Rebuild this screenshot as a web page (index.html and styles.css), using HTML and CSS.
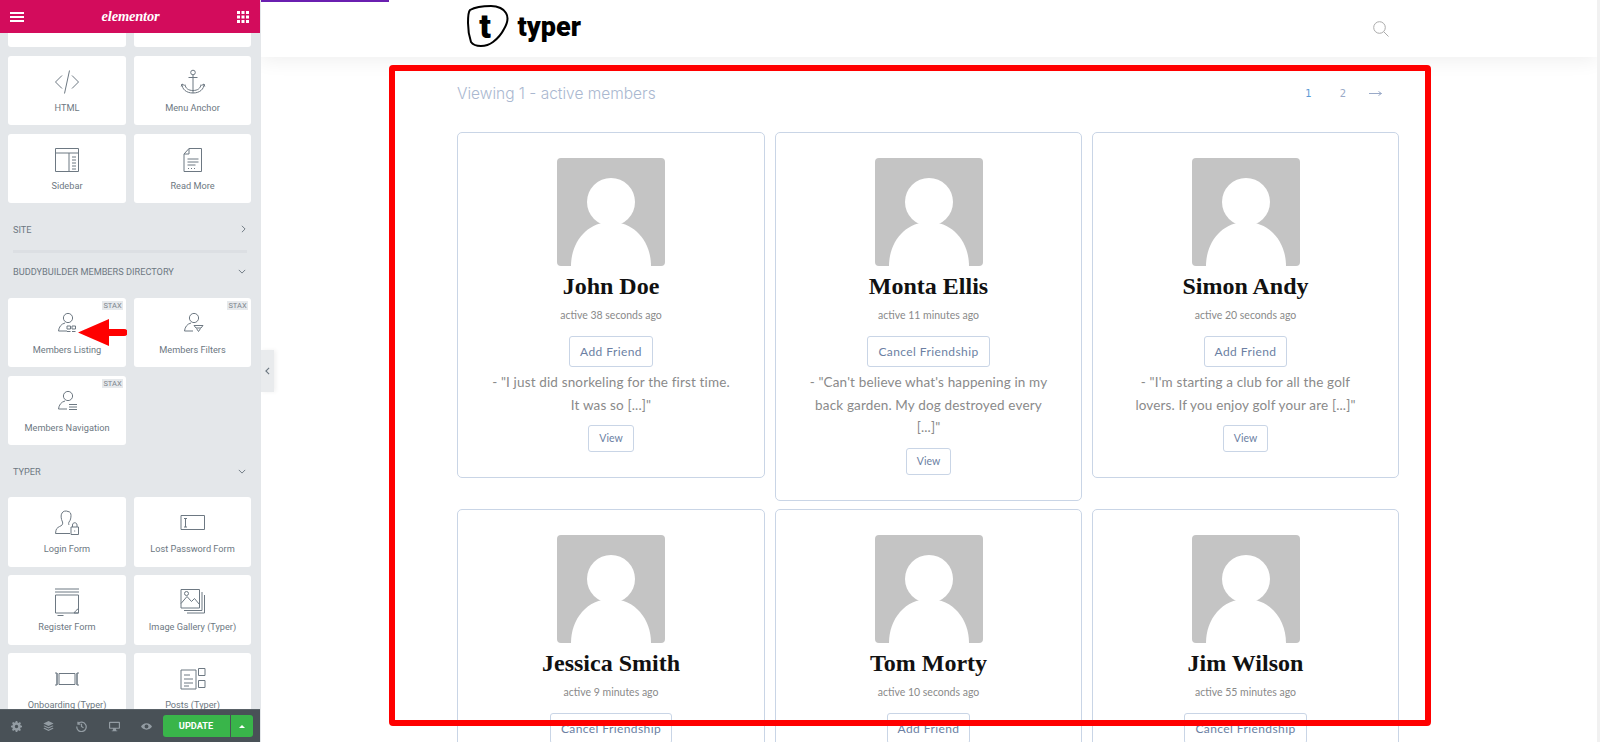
FILE: index.html
```html
<!DOCTYPE html>
<html lang="en">
<head>
<meta charset="utf-8">
<title>Members Listing - Elementor</title>
<link rel="stylesheet" href="styles.css">
</head>
<body>
<svg class="defs" width="0" height="0" aria-hidden="true">
  <symbol id="avatar" viewBox="0 0 108 108">
    <rect width="108" height="108" rx="4" fill="#c4c4c4"/>
    <circle cx="54" cy="44" r="24" fill="#fff"/>
    <path d="M14 108C14 84 30 64 54 64S94 84 94 108Z" fill="#fff"/>
  </symbol>
  <symbol id="person" viewBox="0 0 26 26">
    <circle cx="14" cy="7" r="4.6"/>
    <path d="M11 12C7 13 5 16 4.500 20H13"/>
  </symbol>
</svg>

<div class="app">
  <aside class="sidebar">
    <header class="sb-head">
      <svg class="sb-burger" viewBox="0 0 14 10"><path d="M0 0h14v2H0zM0 4h14v2H0zM0 8h14v2H0z" fill="#fff"/></svg>
      <span class="sb-logo">elementor</span>
      <svg class="sb-grid" viewBox="0 0 12 12"><path d="M0 0h3v3H0zM4.500 0h3v3h-3zM9 0h3v3H9zM0 4.500h3v3H0zM4.500 4.500h3v3h-3zM9 4.500h3v3H9zM0 9h3v3H0zM4.500 9h3v3h-3zM9 9h3v3H9z" fill="#fff"/></svg>
    </header>

    <div class="sb-scroll">
      <div class="widgets widgets-cut">
        <div class="widget"></div>
        <div class="widget"></div>
        <div class="widget">
          <svg class="w-ico" viewBox="0 0 26 26"><path d="M8 6.500 1.500 13 8 19.500M18 6.500 24.500 13 18 19.500M15.500 1.500 10.500 24.500"/></svg>
          <span class="w-label">HTML</span>
        </div>
        <div class="widget">
          <svg class="w-ico" viewBox="0 0 26 26"><circle cx="13" cy="3.500" r="2.300"/><path d="M13 6v18M8.500 8.500h9M2 15c0 5 4 9 11 9s11-4 11-9M2 15l-.8 2.500M2 15l2.500 1.500M24 15l.8 2.500M24 15l-2.500 1.500M5 15.500c.5 4 3.500 6 8 6s7.500-2 8-6"/></svg>
          <span class="w-label">Menu Anchor</span>
        </div>
        <div class="widget">
          <svg class="w-ico" viewBox="0 0 26 26"><path d="M1.500 1.500h23v23h-23zM1.500 6h23M15 6v18.500M18 10h4M18 13h4M18 16h4M18 19h4M18 22h4"/></svg>
          <span class="w-label">Sidebar</span>
        </div>
        <div class="widget">
          <svg class="w-ico" viewBox="0 0 26 26"><path d="M9 1.500h12.500v23h-17.500V7ZM9 1.500V7H4M7.500 12h11M7.500 15h11M7.500 18h8M8 21.500h1M11 21.500h1M14 21.500h1"/></svg>
          <span class="w-label">Read More</span>
        </div>
      </div>

      <div class="cat-head"><span>Site</span><svg class="chev" viewBox="0 0 6 10"><path d="M1 1l4 4-4 4"/></svg></div>
      <div class="cat-rule"></div>

      <div class="cat-head cat-open"><span>BuddyBuilder Members Directory</span><svg class="chev-d" viewBox="0 0 10 6"><path d="M1 1l4 4 4-4"/></svg></div>
      <div class="widgets">
        <div class="widget">
          <span class="badge">STAX</span>
          <svg class="w-ico" viewBox="0 0 26 26"><use href="#person"/><path d="M13 15h3.500v3H13zM18 15h3.500v3H18zM13 20.500h3.500M18 20.500h3.500"/></svg>
          <span class="w-label">Members Listing</span>
        </div>
        <div class="widget">
          <span class="badge">STAX</span>
          <svg class="w-ico" viewBox="0 0 26 26"><use href="#person"/><path d="M14 14.500h9l-2 2.500h-5ZM16.500 17.500l2 3 2-3"/></svg>
          <span class="w-label">Members Filters</span>
        </div>
        <div class="widget">
          <span class="badge">STAX</span>
          <svg class="w-ico" viewBox="0 0 26 26"><use href="#person"/><path d="M15 15.500h8M15 18h8M15 20.500h8"/></svg>
          <span class="w-label">Members Navigation</span>
        </div>
      </div>

      <div class="cat-head cat-open"><span>Typer</span><svg class="chev-d" viewBox="0 0 10 6"><path d="M1 1l4 4 4-4"/></svg></div>
      <div class="widgets">
        <div class="widget">
          <svg class="w-ico" viewBox="0 0 26 26"><path d="M8 3c1-2 4-2.500 6-1.500 2 0 3 2 3 4s-.5 5-2 6.500c-.5 1-.5 2 0 3M8 3C6.500 5 7 9 8.500 12c.5 1.500 0 3-1.500 3.800-2 1-4.500 2-5 4.500l-.5 3.200H16"/><path d="M17 17h7.500v7.500H17zM18.500 17v-2c0-3 4.500-3 4.500 0v2M20.700 20.500v1"/></svg>
          <span class="w-label">Login Form</span>
        </div>
        <div class="widget">
          <svg class="w-ico" viewBox="0 0 26 26"><path d="M1 5.500h23.500v14H1zM4 8.500h3M4 17h3M5.500 8.500V17"/></svg>
          <span class="w-label">Lost Password Form</span>
        </div>
        <div class="widget">
          <svg class="w-ico" viewBox="0 0 26 26"><path d="M1 1h24M1 4h24M1.500 7h23v18h-23zM22 22.500l2.500-2v4.500H20ZM3.500 27.500h6"/></svg>
          <span class="w-label">Register Form</span>
        </div>
        <div class="widget">
          <svg class="w-ico" viewBox="0 0 26 26"><path d="M1 1.500h18.500v18.500H1zM22 4v18.500H4M24.500 7v18H7M1 15.500l6-7 4.500 5 3-3 5 6"/><circle cx="6.500" cy="5.500" r="2"/></svg>
          <span class="w-label">Image Gallery (Typer)</span>
        </div>
        <div class="widget">
          <svg class="w-ico" viewBox="0 0 26 26"><path d="M5 7.500h16v11H5zM1 7h2v12H1M25 7h-2v12h2M3 7v12M23 7v12"/></svg>
          <span class="w-label">Onboarding (Typer)</span>
        </div>
        <div class="widget">
          <svg class="w-ico" viewBox="0 0 26 26"><path d="M1 4h15v19H1zM4 9h6M4 13h9M4 17h9M4 20h5M18.500 2.500H25v7h-6.500zM18.500 14.500H25v7h-6.500z"/></svg>
          <span class="w-label">Posts (Typer)</span>
        </div>
      </div>
    </div>

    <footer class="sb-foot">
      <div class="foot-tools">
        <svg class="foot-ico" viewBox="0 0 14 14"><path d="M6 0h2l.4 1.800 1.300.6 1.600-1 1.400 1.400-1 1.600.6 1.300L14 6v2l-1.800.4-.6 1.300 1 1.600-1.400 1.400-1.600-1-1.300.6L8 14H6l-.4-1.800-1.300-.6-1.600 1-1.400-1.400 1-1.600-.6-1.300L0 8V6l1.800-.4.6-1.300-1-1.600 1.400-1.400 1.600 1 1.300-.6ZM7 4.800a2.200 2.200 0 1 0 0 4.400 2.200 2.200 0 0 0 0-4.400Z" fill-rule="evenodd"/></svg>
        <svg class="foot-ico" viewBox="0 0 14 14"><path d="M7 0l6.500 3.200L7 6.400.5 3.200ZM2 5.600l5 2.500 5-2.500 1.500.8L7 9.600.5 6.400ZM2 8.600l5 2.500 5-2.500 1.500.8L7 12.600.5 9.400Z"/></svg>
        <svg class="foot-ico foot-line" viewBox="0 0 14 14"><path d="M2.500 3.500A6 6 0 1 1 1 7M2.500 1v3h3M7 3.500V7l2.500 1.500"/></svg>
        <svg class="foot-ico" viewBox="0 0 14 14"><path d="M1 1h12c.6 0 1 .4 1 1v7c0 .6-.4 1-1 1H9v2h1.500v1h-7v-1H5v-2H1c-.6 0-1-.4-1-1V2c0-.6.4-1 1-1Zm.5 1.500v6h11v-6Z" fill-rule="evenodd"/></svg>
        <svg class="foot-ico" viewBox="0 0 14 14"><path d="M7 3C3.800 3 1.300 5 0 7c1.300 2 3.800 4 7 4s5.700-2 7-4c-1.300-2-3.800-4-7-4Zm0 1.500a2.500 2.500 0 1 1 0 5 2.500 2.500 0 0 1 0-5Z" fill-rule="evenodd"/></svg>
      </div>
      <div class="foot-btns">
        <span class="btn-update">UPDATE</span>
        <span class="btn-more"><i class="caret"></i></span>
      </div>
    </footer>
  </aside>

  <main class="main">
    <header class="top">
      <div class="top-in">
        <div class="logo">
          <svg class="logo-mark" viewBox="0 0 42 42"><path d="M3 5C10 1 18 1 24 1C31 1 37 4 39 8C42 13 40 19 37 24C34 30 30 34 26 37C22 40 18 41 14 41C9 41 6 40 4 37C2 31 1 24 1 18C1 12 1 7 3 5Z"/><text x="18" y="33" text-anchor="middle" class="logo-t">t</text></svg>
          <span class="logo-word">typer</span>
        </div>
        <svg class="search" viewBox="0 0 16 16"><circle cx="6.500" cy="6.500" r="5.800"/><path d="M10.800 10.800 15.500 15.500"/></svg>
      </div>
    </header>

    <section class="members">
      <div class="members-bar">
        <span class="viewing">Viewing 1 - active members</span>
        <nav class="pager"><span class="pg pg-on">1</span><span class="pg">2</span><svg class="pg-arrow" viewBox="0 0 13 7"><path d="M0 3.500h12.500M9.500 1.500l3 2-3 2"/></svg></nav>
      </div>
      <div class="grid">
        <article class="card">
          <svg class="ava"><use href="#avatar"/></svg>
          <h3 class="name">John Doe</h3>
          <p class="meta">active 38 seconds ago</p>
          <span class="btn">Add Friend</span>
          <p class="update">- "I just did snorkeling for the first time. It was so [...]"</p>
          <span class="btn btn-sm">View</span>
        </article>
        <article class="card">
          <svg class="ava"><use href="#avatar"/></svg>
          <h3 class="name">Monta Ellis</h3>
          <p class="meta">active 11 minutes ago</p>
          <span class="btn">Cancel Friendship</span>
          <p class="update">- "Can't believe what's happening in my back garden. My dog destroyed every [...]"</p>
          <span class="btn btn-sm">View</span>
        </article>
        <article class="card">
          <svg class="ava"><use href="#avatar"/></svg>
          <h3 class="name">Simon Andy</h3>
          <p class="meta">active 20 seconds ago</p>
          <span class="btn">Add Friend</span>
          <p class="update">- "I'm starting a club for all the golf lovers. If you enjoy golf your are [...]"</p>
          <span class="btn btn-sm">View</span>
        </article>
        <article class="card">
          <svg class="ava"><use href="#avatar"/></svg>
          <h3 class="name">Jessica Smith</h3>
          <p class="meta">active 9 minutes ago</p>
          <span class="btn">Cancel Friendship</span>
        </article>
        <article class="card">
          <svg class="ava"><use href="#avatar"/></svg>
          <h3 class="name">Tom Morty</h3>
          <p class="meta">active 10 seconds ago</p>
          <span class="btn">Add Friend</span>
        </article>
        <article class="card">
          <svg class="ava"><use href="#avatar"/></svg>
          <h3 class="name">Jim Wilson</h3>
          <p class="meta">active 55 minutes ago</p>
          <span class="btn">Cancel Friendship</span>
        </article>
      </div>
    </section>
  </main>

  <div class="scrollbar"></div>

  <div class="collapse"><svg viewBox="0 0 6 10"><path d="M5 1 1 5l4 4"/></svg></div>
  <svg class="arrow" viewBox="0 0 49 27"><path d="M0 13.500 31 0v10h15a3.500 3.500 0 0 1 0 7H31v10Z" fill="#ff0000"/></svg>
  <div class="redbox"></div>
</div>
</body>
</html>
```

FILE: styles.css
```css
* { box-sizing: border-box; }
html, body { margin: 0; height: 100%; overflow: hidden; background: #fff; }
body { font-family: "Lato", sans-serif; }
.defs { position: absolute; }

.app { position: relative; display: flex; width: 1600px; height: 742px; overflow: hidden; }

/* Sidebar */
.sidebar {
  position: relative; z-index: 2; flex: none; width: 260px; height: 742px;
  display: flex; flex-direction: column; background: #e4e7ea;
  font-family: "Roboto", sans-serif; box-shadow: 1px 0 0 #e4e7ea;
}
.sb-head {
  flex: none; height: 33px; background: #d30c5c; padding: 0 11px 0 10px;
  display: flex; align-items: center; justify-content: space-between;
}
.sb-burger { width: 14px; height: 10px; }
.sb-grid { width: 12px; height: 12px; }
.sb-logo {
  font-family: "Liberation Serif", serif; font-style: italic; font-weight: 700;
  font-size: 14.500px; color: #fff; letter-spacing: -.2px; line-height: 1;
}
.sb-scroll { flex: 1; min-height: 0; overflow: hidden; }
.widgets { display: grid; grid-template-columns: 118px 117px; gap: 8.5px 8px; padding: 0 8px; }
.widgets-cut { margin-top: -55.5px; }
.widget {
  position: relative; height: 69.5px; background: #fff; border-radius: 3px;
  padding-top: 13px; display: flex; flex-direction: column; align-items: center;
}
.w-ico { width: 26px; height: 26px; fill: none; stroke: #6d7882; stroke-width: 1; overflow: visible; flex: none; }
.w-label { margin-top: 6px; font-size: 9.200px; line-height: 14px; color: #6d7882; white-space: nowrap; }
.badge {
  position: absolute; top: 3px; right: 3px; height: 9px; width: 21px; background: #e6e9ec;
  font-size: 7.500px; line-height: 9px; color: #7d858c; text-align: center;
}
.cat-head {
  margin-top: 18px; height: 16px; padding: 0 14px 0 13px;
  display: flex; align-items: center; justify-content: space-between;
  font-size: 9.200px; color: #6d7882; text-transform: uppercase;
}
.cat-open { margin-bottom: 18px; }
.cat-rule { margin: 12.5px 13px 0; height: 3px; background: #dcdfe3; }
.cat-rule + .cat-head { margin-top: 11px; }
.chev { width: 5px; height: 8px; fill: none; stroke: #6d7882; stroke-width: 1.200; }
.chev-d { width: 8px; height: 5px; fill: none; stroke: #6d7882; stroke-width: 1.200; }

.sb-foot {
  flex: none; height: 33px; background: #495157; padding: 0 7.5px 0 0;
  display: flex; align-items: center; justify-content: space-between;
  border-top: 1px solid #5a6268;
}
.foot-tools { display: flex; align-items: center; gap: 21.7px; padding-left: 10.5px; }
.foot-ico { width: 11px; height: 11px; fill: #939ca3; flex: none; }
.foot-line { fill: none; stroke: #939ca3; stroke-width: 1.600; }
.foot-btns { display: flex; height: 22px; }
.btn-update {
  width: 67px; background: #39b54a; color: #fff; font-size: 9.200px; font-weight: 700;
  line-height: 22px; text-align: center; border-radius: 3px 0 0 3px;
}
.btn-more {
  width: 22px; margin-left: 1px; background: #39b54a; border-radius: 0 3px 3px 0;
  display: flex; align-items: center; justify-content: center;
}
.caret { width: 0; height: 0; border: 3.500px solid transparent; border-top: 0; border-bottom-color: #fff; }

/* Main */
.main { flex: 1; min-width: 0; height: 742px; overflow: hidden; background: #fff; }
.top {
  position: relative; height: 57px; background: #fff;
  box-shadow: 0 3px 20px rgba(0, 0, 0, .07);
}
.top::before {
  content: ""; position: absolute; left: 0; top: 0; width: 129px; height: 1.500px; background: #6a1fb0;
}
.top-in {
  width: 942px; height: 57px; margin: 0 auto; padding: 0 11px 0 9px;
  display: flex; align-items: center; justify-content: space-between;
}
.logo { display: flex; align-items: center; gap: 9px; margin-top: -5px; }
.logo-mark { width: 42px; height: 42px; fill: none; stroke: #000; stroke-width: 2; overflow: visible; }
.logo-t { font-family: "Roboto", sans-serif; font-weight: 900; font-size: 34px; fill: #000; stroke: none; }
.logo-word { font-family: "Roboto", sans-serif; font-weight: 900; font-size: 27px; line-height: 1; color: #000; margin-top: 2px; }
.search { width: 16px; height: 16px; fill: none; stroke: #aaa; stroke-width: 1; }

.members { width: 943px; margin: 0 auto; padding: 25px 1px 0 0; }
.members-bar { height: 22px; margin-bottom: 28px; display: flex; align-items: center; justify-content: space-between; }
.viewing { font-family: "Inter", sans-serif; font-weight: 300; font-size: 15.500px; color: #aab8d0; }
.pager { display: flex; align-items: center; gap: 23px; padding-right: 17px; font-family: "DejaVu Sans", sans-serif; font-size: 10px; color: #9aaac8; }
.pg-on { color: #5b9bd5; margin-right: 5px; }
.pg-arrow { width: 13px; height: 7px; fill: none; stroke: #9aaac8; stroke-width: 1; }

.grid { display: grid; grid-template-columns: 308px 307px 307px; gap: 8px 10px; align-items: start; }
.card {
  border: 1px solid #c9d5e6; border-radius: 5px; background: #fff;
  padding: 25px 30px 25px; display: flex; flex-direction: column; align-items: center; text-align: center;
}
.ava { width: 108px; height: 108px; display: block; }
.name {
  margin: 6px 0 0; font-family: "Liberation Serif", serif; font-weight: 700;
  font-size: 24px; line-height: 28px; color: #111;
}
.meta { margin: 8px 0 0; font-size: 10.500px; line-height: 14px; color: #8a8a8a; }
.btn {
  margin-top: 14px; height: 31px; padding: 0 10px; border: 1px solid #c9d5e6; border-radius: 3px;
  font-size: 12px; line-height: 29px; color: #6c7fa3; letter-spacing: .4px; white-space: nowrap;
}
.btn-sm { margin-top: 9px; height: 27px; line-height: 25px; font-size: 10.500px; letter-spacing: 0; }
.update { margin: 4px 0 0; font-size: 13.500px; line-height: 22.500px; color: #8a8a8a; letter-spacing: .15px; }

.scrollbar { flex: none; width: 3px; height: 742px; background: #f1f1f1; }

/* Overlays */
.collapse {
  position: absolute; z-index: 3; left: 261px; top: 350px; width: 13px; height: 42px;
  background: #e9ebed; box-shadow: 2px 0 4px rgba(0, 0, 0, .06);
  display: flex; align-items: center; justify-content: center;
}
.collapse svg { width: 5px; height: 8px; fill: none; stroke: #6d7882; stroke-width: 1.400; }
.arrow { position: absolute; z-index: 4; left: 78px; top: 319px; width: 49px; height: 27px; }
.redbox {
  position: absolute; z-index: 5; left: 389px; top: 65px; width: 1042px; height: 661px;
  border: 6.500px solid #ff0000; border-radius: 4px;
}
```
